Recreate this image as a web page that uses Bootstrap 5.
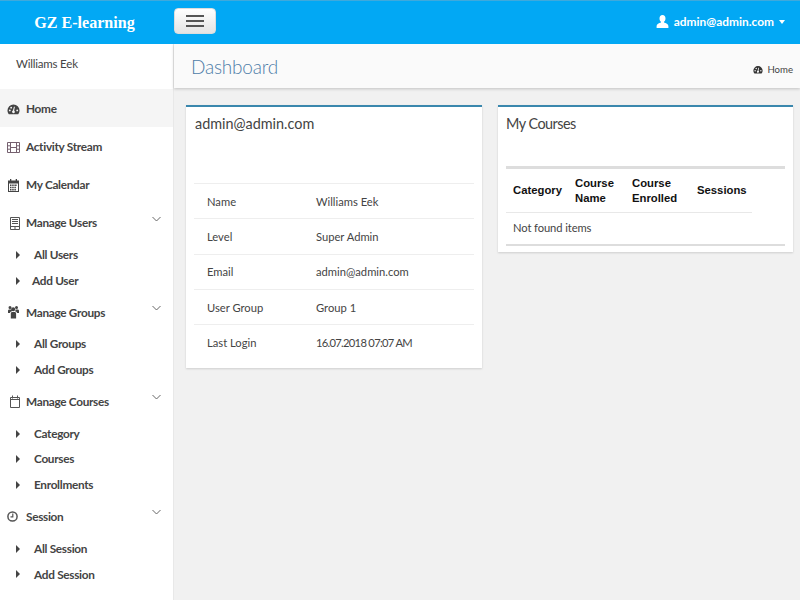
<!DOCTYPE html>
<html lang="en"><head><meta charset="utf-8"><title>GZ E-learning</title>
<link rel="stylesheet" href="https://cdn.jsdelivr.net/npm/bootstrap@5.3.0/dist/css/bootstrap.min.css">
<style>
html,body{height:100%;overflow:hidden}
body{font-family:"Lato","Liberation Sans",sans-serif;font-size:12px;color:#444;background:#f1f1f1}
.topbar{height:44px;background:#02a8f4;border-top:1px solid #3fa9dc;padding:0}
.brandname{width:169px;text-align:center;font:700 16.1px "Liberation Serif",serif;color:#fff;margin:0 4px 0 0}
.burger{width:42px;height:26px;background:linear-gradient(#fff,#e4e4e4);border:1px solid #ddd;border-radius:4px;padding:0;margin-left:1px;margin-top:-3px}
.burger i{display:block;width:18px;height:2px;background:#555;margin:3px auto}
.usermenu{color:#fff;font-weight:700;font-size:11.9px;margin-right:15px;margin-top:-1px;gap:5px}
.caretdown{width:0;height:0;border:3px solid transparent;border-top:4px solid #fff;border-bottom:0}
.shell{height:556px}
.sidebox{width:174px;background:#fff;border-right:1px solid #e8e8e8;flex:none}
.whoami{height:45px;padding:11px 0 0 16px;font-size:11.5px;letter-spacing:-.2px;color:#444}
.menulist{font-weight:700;font-size:11.8px;letter-spacing:-.3px;color:#444}
.menurow{height:38px;padding-left:7px;padding-top:2px;gap:6px}
.menurow.isactive{background:#f5f5f5}
.menurow svg{width:13px;height:13px;flex:none;fill:#444}
.menurow .outlined{fill:none;stroke:#555;stroke-width:1}
.menurow .filmicon{stroke:#75606f}
.menurow .chev{width:9px;height:6px;fill:none;stroke:#666;stroke-width:1;margin-left:auto;margin-right:12px;margin-top:-9px}
.subrow{height:25.7px;padding-left:16px;padding-top:2px}
.subrow svg{width:4px;height:8px;fill:#444;flex:none}
.subrow span{margin-left:14px}
.subrow span.tight{margin-left:12px}
.mainpane{min-width:0}
.pagehead{height:44px;background:#fafafa;box-shadow:0 1px 3px rgba(0,0,0,.2);padding:0 7px 0 17px}
.pagehead h1{font-size:19px;font-weight:300;letter-spacing:-.2px;color:#4f7da8;margin:3px 0 0}
.crumb{font-size:9.6px;color:#444;gap:4px;margin-top:9px}
.crumb svg{width:10px;height:10px;fill:#333}
.cardsarea{padding:17px 7px 0 12px;gap:16px}
.panelbox{background:#fff;border-top:2px solid #3a87ad;box-shadow:0 1px 2px rgba(0,0,0,.15);padding:0 8px 8px;width:296px}
.panelbox+.panelbox{width:295px;padding-bottom:6px}
.panelbox h2{font-size:14.4px;font-weight:400;color:#444;margin:0;padding:8px 0 0 1px;height:76px}
.panelbox+.panelbox h2{height:59px;letter-spacing:-.5px;padding-left:0}
.infotable{margin:0;font-size:11.2px;--bs-table-color:#444}
.infotable td{padding:2px 0 0 13px;height:35.3px;vertical-align:middle;border-bottom:1px solid #eee}
.infotable tr:first-child td{border-top:1px solid #eee}
.infotable tr:last-child td{border-bottom:0}
.infotable td:first-child{width:109px}
.numtext{letter-spacing:-.7px}
.coursewrap{border-top:3px solid #ddd;border-bottom:2px solid #ddd}
.coursetable{width:246px;margin:0;font-size:11.2px;letter-spacing:-.1px;--bs-table-color:#444;table-layout:fixed}
.coursetable th{font:700 11.3px/14.5px "Liberation Sans",sans-serif;letter-spacing:0;color:#111;padding:7px;vertical-align:middle;border-bottom:1px solid #e8e8e8}
.coursetable th:nth-child(1){width:62px}
.coursetable th:nth-child(2){width:57px}
.coursetable th:nth-child(3){width:65px}
.coursetable td{padding:7px;border:0;height:30px}
</style></head>
<body>
<nav class="navbar topbar d-flex flex-nowrap justify-content-start">
  <a class="brandname text-decoration-none" href="#">GZ E-learning</a>
  <button class="burger" type="button" aria-label="Toggle menu"><i></i><i></i><i></i></button>
  <div class="usermenu ms-auto d-flex align-items-center">
    <svg width="13" height="13" viewBox="0 0 13 13" fill="#fff"><path d="M6.500 0C4.600 0 3.500 1.500 3.500 3.400c0 1.300.6 2.600 1.500 3.300v.9C3 8.300.6 9 .6 11v2h11.800v-2c0-2-2.400-2.700-4.400-3.400v-.9c.9-.7 1.500-2 1.500-3.300C9.500 1.500 8.400 0 6.500 0z"/></svg>
    <span>admin@admin.com</span><span class="caretdown"></span>
  </div>
</nav>
<div class="shell d-flex">
  <aside class="sidebox">
    <div class="whoami">Williams Eek</div>
    <div class="menulist d-flex flex-column">
      <div class="menurow isactive d-flex align-items-center"><svg viewBox="0 0 14 14"><path d="M7 1.500A6.500 6.500 0 0 0 .5 8c0 1.600.6 3 1.500 4h10c.9-1 1.500-2.400 1.500-4A6.500 6.500 0 0 0 7 1.500zM3 9a1 1 0 1 1 0-2 1 1 0 0 1 0 2zm1.500-3a1 1 0 1 1 0-2 1 1 0 0 1 0 2zM7 11a1.500 1.500 0 0 1-.6-2.900L7.500 4h1L7.700 8.200A1.500 1.500 0 0 1 7 11zm4-2a1 1 0 1 1 0-2 1 1 0 0 1 0 2z"/></svg><span>Home</span></div>
      <div class="menurow d-flex align-items-center"><svg class="outlined filmicon" viewBox="0 0 13 13"><path d="M.5 1.500h12v10H.5zM3.500 1.500v10M9.500 1.500v10M.5 4.800h3M.5 8.200h3M9.500 4.800h3M9.500 8.200h3M3.500 6.500h6"/></svg><span>Activity Stream</span></div>
      <div class="menurow d-flex align-items-center"><svg viewBox="0 0 13 13"><path fill-rule="evenodd" d="M3 0h1.300v1.500h4.400V0H10v1.500h2V13H1V1.500h2zM2 4.500V12h9V4.500zM3 5.500h1.500V7H3zm2.200 0h1.500V7H5.200zm2.200 0h1.500V7H7.400zm2-.1h.6V7h-.6zM3 7.800h1.500v1.500H3zm2.200 0h1.500v1.500H5.200zm2.200 0h1.500v1.500H7.400zM3 10h1.500v1.400H3zm2.200 0h1.500v1.400H5.200zm2.200 0h1.500v1.400H7.400z"/></svg><span>My Calendar</span></div>
      <div class="menurow d-flex align-items-center"><svg class="outlined" viewBox="0 0 13 13"><path d="M3.500.5h9v12h-9zM5 2.500h6M5 4.500h6M5 6.500h6M3.500 9.500h9M7 11h2"/></svg><span>Manage Users</span><svg class="chev" viewBox="0 0 9 6"><path d="M.5 1l4 4 4-4"/></svg></div>
      <div class="subrow d-flex align-items-center"><svg viewBox="0 0 4 8"><path d="M0 0l4 4-4 4z"/></svg><span>All Users</span></div>
      <div class="subrow d-flex align-items-center"><svg viewBox="0 0 4 8"><path d="M0 0l4 4-4 4z"/></svg><span class="tight">Add User</span></div>
      <div class="menurow d-flex align-items-center"><svg viewBox="0 0 13 13"><path d="M4 0a1.500 1.500 0 1 1 0 3 1.500 1.500 0 0 1 0-3zm6.500 0a1.500 1.500 0 1 1 0 3 1.500 1.500 0 0 1 0-3zM7.200 1.200a2 2 0 1 1 0 4 2 2 0 0 1 0-4zM2 7V4.800C2 4 2.600 3.400 3.300 3.400h2c.1.700.4 1.400.7 1.900C4.900 5.500 4.200 6 4 7zm11 0h-2c-.2-1-.9-1.500-2-1.700.3-.5.6-1.200.7-1.900h2c.7 0 1.300.6 1.300 1.400zM4.800 12.500V7.400c0-.9.600-1.500 1.400-1.500h2.500c.8 0 1.400.6 1.400 1.500v5.100z" transform="translate(-1 0)"/></svg><span>Manage Groups</span><svg class="chev" viewBox="0 0 9 6"><path d="M.5 1l4 4 4-4"/></svg></div>
      <div class="subrow d-flex align-items-center"><svg viewBox="0 0 4 8"><path d="M0 0l4 4-4 4z"/></svg><span>All Groups</span></div>
      <div class="subrow d-flex align-items-center"><svg viewBox="0 0 4 8"><path d="M0 0l4 4-4 4z"/></svg><span>Add Groups</span></div>
      <div class="menurow d-flex align-items-center"><svg class="outlined" viewBox="0 0 13 13"><path d="M3.500 2.500h9v10h-9zM3.500 4.500h9M5.500.5v3M10.500.5v3"/></svg><span>Manage Courses</span><svg class="chev" viewBox="0 0 9 6"><path d="M.5 1l4 4 4-4"/></svg></div>
      <div class="subrow d-flex align-items-center"><svg viewBox="0 0 4 8"><path d="M0 0l4 4-4 4z"/></svg><span>Category</span></div>
      <div class="subrow d-flex align-items-center"><svg viewBox="0 0 4 8"><path d="M0 0l4 4-4 4z"/></svg><span>Courses</span></div>
      <div class="subrow d-flex align-items-center"><svg viewBox="0 0 4 8"><path d="M0 0l4 4-4 4z"/></svg><span>Enrollments</span></div>
      <div class="menurow d-flex align-items-center"><svg class="outlined" viewBox="0 0 13 13"><circle cx="5.500" cy="6.500" r="4.600" stroke-width="1.500"/><path d="M5.800 3.500v3.300H3.500" stroke-width="1.200"/></svg><span>Session</span><svg class="chev" viewBox="0 0 9 6"><path d="M.5 1l4 4 4-4"/></svg></div>
      <div class="subrow d-flex align-items-center"><svg viewBox="0 0 4 8"><path d="M0 0l4 4-4 4z"/></svg><span>All Session</span></div>
      <div class="subrow d-flex align-items-center"><svg viewBox="0 0 4 8"><path d="M0 0l4 4-4 4z"/></svg><span>Add Session</span></div>
    </div>
  </aside>
  <main class="mainpane flex-grow-1">
    <div class="pagehead d-flex align-items-center justify-content-between">
      <h1>Dashboard</h1>
      <div class="crumb d-flex align-items-center"><svg viewBox="0 0 14 14"><path d="M7 1.500A6.500 6.500 0 0 0 .5 8c0 1.600.6 3 1.500 4h10c.9-1 1.500-2.400 1.500-4A6.500 6.500 0 0 0 7 1.500zM3 9a1 1 0 1 1 0-2 1 1 0 0 1 0 2zm1.500-3a1 1 0 1 1 0-2 1 1 0 0 1 0 2zM7 11a1.500 1.500 0 0 1-.6-2.900L7.500 4h1L7.700 8.200A1.500 1.500 0 0 1 7 11zm4-2a1 1 0 1 1 0-2 1 1 0 0 1 0 2z"/></svg><span>Home</span></div>
    </div>
    <div class="cardsarea d-flex align-items-start">
      <section class="panelbox">
        <h2>admin@admin.com</h2>
        <table class="table infotable">
          <tbody>
            <tr><td>Name</td><td>Williams Eek</td></tr>
            <tr><td>Level</td><td>Super Admin</td></tr>
            <tr><td>Email</td><td>admin@admin.com</td></tr>
            <tr><td>User Group</td><td>Group 1</td></tr>
            <tr><td>Last Login</td><td class="numtext">16.07.2018 07:07 AM</td></tr>
          </tbody>
        </table>
      </section>
      <section class="panelbox">
        <h2>My Courses</h2>
        <div class="coursewrap">
          <table class="table coursetable">
            <thead><tr><th>Category</th><th>Course Name</th><th>Course Enrolled</th><th>Sessions</th></tr></thead>
            <tbody><tr><td colspan="4">Not found items</td></tr></tbody>
          </table>
        </div>
      </section>
    </div>
  </main>
</div>
</body></html>
